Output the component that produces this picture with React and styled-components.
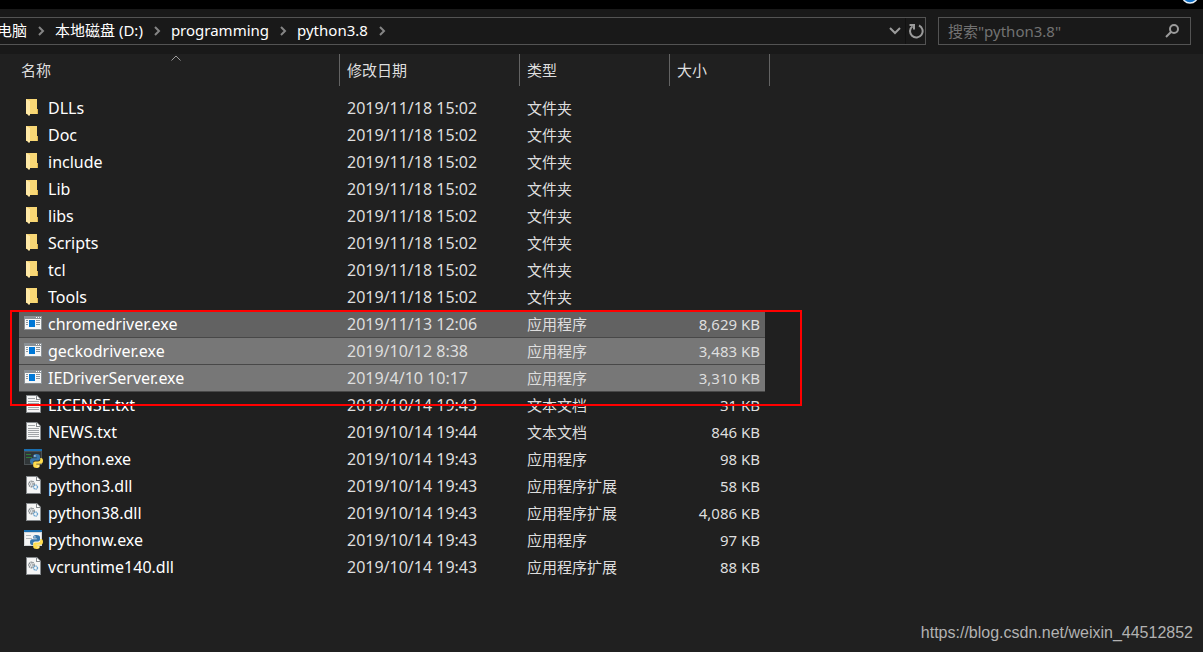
import React, { useState } from 'react'
import styled, { createGlobalStyle } from "styled-components";

const crumbs = ["电脑", "本地磁盘 (D:)", "programming", "python3.8"];

const files = [
  { name: "DLLs", date: "2019/11/18 15:02", type: "文件夹", size: "", icon: "folder" },
  { name: "Doc", date: "2019/11/18 15:02", type: "文件夹", size: "", icon: "folder" },
  { name: "include", date: "2019/11/18 15:02", type: "文件夹", size: "", icon: "folder" },
  { name: "Lib", date: "2019/11/18 15:02", type: "文件夹", size: "", icon: "folder" },
  { name: "libs", date: "2019/11/18 15:02", type: "文件夹", size: "", icon: "folder" },
  { name: "Scripts", date: "2019/11/18 15:02", type: "文件夹", size: "", icon: "folder" },
  { name: "tcl", date: "2019/11/18 15:02", type: "文件夹", size: "", icon: "folder" },
  { name: "Tools", date: "2019/11/18 15:02", type: "文件夹", size: "", icon: "folder" },
  { name: "chromedriver.exe", date: "2019/11/13 12:06", type: "应用程序", size: "8,629 KB", icon: "exe", fill: "#626262" },
  { name: "geckodriver.exe", date: "2019/10/12 8:38", type: "应用程序", size: "3,483 KB", icon: "exe", fill: "#777777" },
  { name: "IEDriverServer.exe", date: "2019/4/10 10:17", type: "应用程序", size: "3,310 KB", icon: "exe", fill: "#777777" },
  { name: "LICENSE.txt", date: "2019/10/14 19:43", type: "文本文档", size: "31 KB", icon: "txt" },
  { name: "NEWS.txt", date: "2019/10/14 19:44", type: "文本文档", size: "846 KB", icon: "txt" },
  { name: "python.exe", date: "2019/10/14 19:43", type: "应用程序", size: "98 KB", icon: "python" },
  { name: "python3.dll", date: "2019/10/14 19:43", type: "应用程序扩展", size: "58 KB", icon: "dll" },
  { name: "python38.dll", date: "2019/10/14 19:43", type: "应用程序扩展", size: "4,086 KB", icon: "dll" },
  { name: "pythonw.exe", date: "2019/10/14 19:43", type: "应用程序", size: "97 KB", icon: "pythonw" },
  { name: "vcruntime140.dll", date: "2019/10/14 19:43", type: "应用程序扩展", size: "88 KB", icon: "dll" },
]

const FolderIcon = () => (
  <>
    <path d="M2 1H13V11H14V16H2Z" fill="#f3cf6b" />
    <path d="M6 1H13V11H14V16H6Z" fill="#f8d775" />
    <path d="M2 1L6 3V17L5 18L2 15Z" fill="#ffe9a6" />
    <path d="M13 11H14V16H13Z" fill="#dfb750" />
  </>
)

const ExeIcon = () => (
  <>
    <path d="M0 2H18V16H0Z" fill="#8b9196" />
    <path d="M1 5H17V15H1Z" fill="#f7f7f7" />
    <path d="M12 3H13V4H12ZM14 3H15V4H14ZM16 3H17V4H16Z" fill="#fff" />
    <path d="M5 6H11V13H5Z" fill="#0078d7" />
    <path d="M2 6H4M2 8H4M2 10H4M12 6H16M12 8H16M12 10H16" stroke="#8d969d" strokeWidth="1" transform="translate(0 .5)" />
  </>
)

const Sheet = () => (
  <>
    <path d="M2 0H13L17 4V18H2Z" fill="#85898c" />
    <path d="M3 1H12V5H16V17H3Z" fill="#f5f5f5" />
    <path d="M13 1V4H16Z" fill="#fff" />
  </>
)

const TxtIcon = () => (
  <>
    <Sheet />
    <path d="M4 3.5H11M4 6.5H15M4 8.5H15M4 10.5H15M4 12.5H15M4 14.5H15" stroke="#a1a4a7" />
  </>
)

const DllIcon = () => (
  <>
    <Sheet />
    <circle cx="7.5" cy="8" r="2.7" fill="none" stroke="#70777c" strokeWidth="1.4" strokeDasharray="1.2 .7" />
    <circle cx="7.5" cy="8" r="1.2" fill="none" stroke="#9aa0a4" strokeWidth=".8" />
    <circle cx="11.5" cy="11" r="2" fill="none" stroke="#6ba3cf" strokeWidth="1.4" strokeDasharray="1.2 .5" />
  </>
)

const PythonIcon = ({ dark }) => (
  <>
    <path d="M0 0H18V16H0Z" fill={dark ? "#4b5154" : "#d2d6d9"} />
    <path d="M1 3H17V15H1Z" fill={dark ? "#303638" : "#f4f4f4"} />
    <path d="M0 0H18V2H0Z" fill="#1a6fb0" />
    <path d="M2 5.5H7M2 8.5H8" stroke={dark ? "#2f7d38" : "#b3b8bb"} />
    <path d="M12.5 5C9.5 5 9.3 6.2 9.3 7.2V8.5H12.8V9.2H8C6.5 9.2 6 10.7 6 12.3S6.7 15 8 15H9.2V13.3C9.2 12.2 10 11.5 11 11.5H14C15.1 11.5 16 10.7 16 9.6V7.2C16 5.7 14.5 5 12.5 5Z" fill="#3776ab" />
    <path d="M12.5 19C15.5 19 15.7 17.8 15.7 16.8V15.5H12.3V14.8H17C18.5 14.8 19 13.3 19 11.8S18.3 9 17 9H16.3V10.5C16.3 11.7 15.3 12.4 14.2 12.4H11.2C10.1 12.4 9.2 13.2 9.2 14.3V16.8C9.2 18.3 10.7 19 12.5 19Z" fill="#ffdc4e" />
    <circle cx="10.9" cy="6.9" r=".7" fill="#fff" />
    <circle cx="14.1" cy="17.1" r=".7" fill="#fff" />
  </>
)

const icons = {
  folder: <FolderIcon />,
  exe: <ExeIcon />,
  txt: <TxtIcon />,
  dll: <DllIcon />,
  python: <PythonIcon dark />,
  pythonw: <PythonIcon />,
}

const App = () => {
  const [search, setSearch] = useState("")

  return (
    <>
      <GlobalStyle />
      <Window>
        <TitleStrip>
          <svg width="16" height="4" viewBox="0 0 16 4" aria-hidden="true">
            <circle cx="8" cy="-5" r="8" fill="#0f6fc5" stroke="#e8f1f8" strokeWidth="1.5" />
          </svg>
        </TitleStrip>
        <Toolbar>
          <AddressBar aria-label="地址">
            <Crumbs>
              {crumbs.map((crumb) => (
                <React.Fragment key={crumb}>
                  <Crumb>{crumb}</Crumb>
                  <Chevron viewBox="0 0 28 10" aria-hidden="true">
                    <path d="M12 1L16 5L12 9" />
                  </Chevron>
                </React.Fragment>
              ))}
            </Crumbs>
            <IconButton $width={20} aria-label="展开">
              <svg width="12" height="8" viewBox="0 0 12 8"><path d="M1 1L6 6L11 1" /></svg>
            </IconButton>
            <IconButton $width={20} $divided aria-label="刷新">
              <svg width="16" height="16" viewBox="0 0 16 16">
                <path d="M11 2.5A6.3 6.3 0 1 1 4.5 3.2M1.5 2H6V6.5" />
              </svg>
            </IconButton>
          </AddressBar>
          <SearchBox>
            <SearchInput
              type="text"
              aria-label="搜索"
              placeholder={'搜索"python3.8"'}
              value={search}
              onChange={(e) => setSearch(e.target.value)}
            />
            <IconButton $width={36} aria-label="开始搜索">
              <svg width="14" height="14" viewBox="0 0 14 14">
                <circle cx="9" cy="5" r="4" /><path d="M6.2 7.8L1 13" />
              </svg>
            </IconButton>
          </SearchBox>
        </Toolbar>
        <Content>
          <FileTable>
            <colgroup>
              <Col $width={321} />
              <Col $width={180} />
              <Col $width={150} />
              <Col $width={100} />
            </colgroup>
            <thead>
              <tr>
                <HeadCell aria-sort="ascending">
                  <HeadButton $first>名称</HeadButton>
                  <SortMark viewBox="0 0 10 6" aria-hidden="true"><path d="M.5 5.5L5 1L9.5 5.5" /></SortMark>
                </HeadCell>
                <HeadCell><HeadButton>修改日期</HeadButton></HeadCell>
                <HeadCell><HeadButton>类型</HeadButton></HeadCell>
                <HeadCell><HeadButton>大小</HeadButton></HeadCell>
              </tr>
            </thead>
            <tbody>
              {files.map((file) => (
                <Row key={file.name} $fill={file.fill}>
                  <Cell>
                    <FileName>
                      <svg width="20" height="20" viewBox="0 0 20 20" aria-hidden="true">{icons[file.icon]}</svg>
                      {file.name}
                    </FileName>
                  </Cell>
                  <Cell>{file.date}</Cell>
                  <TypeCell>{file.type}</TypeCell>
                  <SizeCell>{file.size}</SizeCell>
                </Row>
              ))}
            </tbody>
          </FileTable>
          <RedFrame />
        </Content>
        <Watermark href="https://blog.csdn.net/weixin_44512852">https://blog.csdn.net/weixin_44512852</Watermark>
      </Window>
    </>
  )
}

const GlobalStyle = createGlobalStyle`
  *{
    box-sizing: border-box;
  }
  body{
    margin: 0;
    background: #202020;
  }
  body, button, input{
    font-family: "Noto Sans", "Noto Sans CJK SC", sans-serif;
    font-size: 15px;
  }
  button{
    padding: 0;
    border: none;
    background: none;
  }
`;

const Window = styled.div`
  position: relative;
  display: flex;
  flex-direction: column;
  min-height: 100vh;
  background: #202020;
  color: #dedede;
  overflow: hidden;
`;

const TitleStrip = styled.div`
  display: flex;
  justify-content: flex-end;
  height: 9px;
  padding-right: 5px;
  background: #000;
`;

const Toolbar = styled.div`
  display: flex;
  gap: 12px;
  padding: 8px 12px 9px 0;
  background: #191919;
`;

const AddressBar = styled.nav`
  display: flex;
  flex: 1;
  min-width: 0;
  height: 28px;
  border: 1px solid #535353;
  border-left: none;
`;

const Crumbs = styled.div`
  display: flex;
  flex: 1;
  align-items: center;
  min-width: 0;
  margin-left: -3px;
  overflow: hidden;
`;

const Crumb = styled.button`
  color: #fff;
  line-height: 24px;
  padding-bottom: 2px;
  white-space: nowrap;
`;

const Chevron = styled.svg`
  flex: none;
  width: 28px;
  height: 10px;
  fill: none;
  stroke: #858585;
  stroke-width: 2;
`;

const IconButton = styled.button`
  display: flex;
  flex: none;
  align-items: center;
  justify-content: center;
  width: ${({ $width }) => $width}px;
  border-left: ${({ $divided }) => $divided ? "1px solid #111" : "none"};
  svg{
    fill: none;
    stroke: #9b9b9b;
    stroke-width: 2;
  }
`;

const SearchBox = styled.div`
  display: flex;
  width: 253px;
  height: 28px;
  border: 1px solid #535353;
`;

const SearchInput = styled.input`
  flex: 1;
  min-width: 0;
  padding: 0 0 0 9px;
  border: none;
  outline: none;
  background: transparent;
  color: #fff;
  &::placeholder{
    color: #727272;
    opacity: 1;
  }
`;

const Content = styled.main`
  position: relative;
  flex: 1;
  padding-left: 19px;
`;

const FileTable = styled.table`
  width: 751px;
  table-layout: fixed;
  border-collapse: separate;
  border-spacing: 0;
`;

const Col = styled.col`
  width: ${({ $width }) => $width}px;
`;

const HeadCell = styled.th`
  position: relative;
  padding: 0 0 9px;
`;

const HeadButton = styled.button`
  display: block;
  width: 100%;
  height: 32px;
  padding-left: ${({ $first }) => $first ? "2px" : "7px"};
  border-right: 1px solid #636363;
  color: #dedede;
  line-height: 32px;
  text-align: left;
`;

const SortMark = styled.svg`
  position: absolute;
  top: 1px;
  left: 152px;
  width: 10px;
  height: 6px;
  fill: none;
  stroke: #9b9b9b;
`;

const Cell = styled.td`
  height: 27px;
  padding: 0 0 0 7px;
  font-size: 16px;
  line-height: 26px;
  vertical-align: top;
  white-space: nowrap;
  &:first-child{
    padding-left: 5px;
    color: #fff;
  }
`;

const TypeCell = styled(Cell)`
  font-size: 15px;
`;

/* the selection stops short of the header divider */
const SizeCell = styled(Cell)`
  padding-right: 5px;
  border-right: 5px solid transparent;
  background-clip: padding-box;
  font-size: 15px;
  text-align: right;
`;

const Row = styled.tr`
  ${Cell}{
    background-color: ${({ $fill }) => $fill || "transparent"};
    box-shadow: ${({ $fill }) => $fill ? "inset 0 -1px #484848" : "none"};
  }
`;

const FileName = styled.div`
  display: flex;
  align-items: center;
  gap: 4px;
  height: 26px;
`;

const RedFrame = styled.div`
  position: absolute;
  top: 256px;
  left: 10px;
  width: 792px;
  height: 96px;
  border: 2px solid #ff0000;
  pointer-events: none;
`;

const Watermark = styled.a`
  position: absolute;
  right: 10px;
  bottom: 8px;
  color: #b2b2b2;
  font-family: "Liberation Sans", sans-serif;
  font-size: 16px;
  line-height: 22px;
  text-decoration: none;
`;

export default App
